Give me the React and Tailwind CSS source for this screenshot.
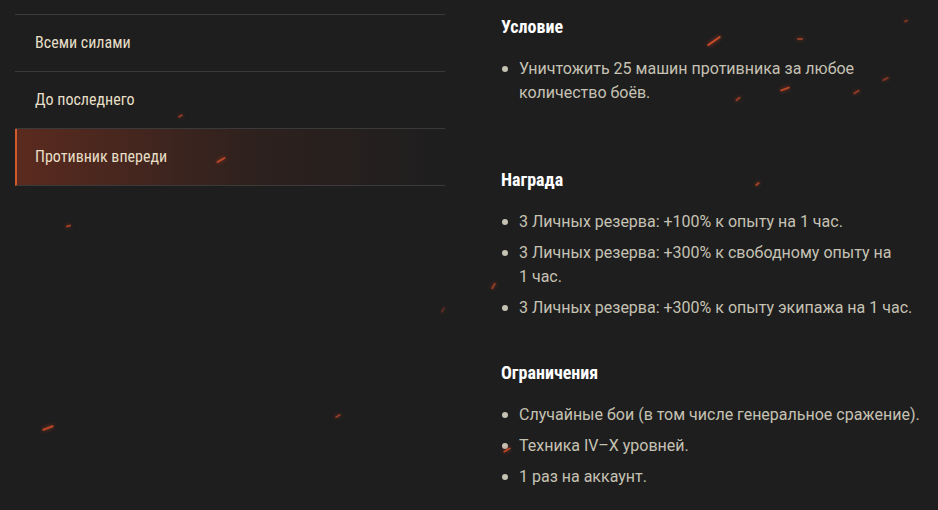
const MENU = ["Всеми силами", "До последнего", "Противник впереди"];

const SECTIONS = [
  {
    title: "Условие",
    items: ["Уничтожить 25 машин противника за любое количество боёв."],
    gap: "mb-[65px]",
  },
  {
    title: "Награда",
    items: [
      "3 Личных резерва: +100% к опыту на 1 час.",
      "3 Личных резерва: +300% к свободному опыту на 1\u00a0час.",
      "3 Личных резерва: +300% к опыту экипажа на 1 час.",
    ],
    gap: "mb-[43px]",
  },
  {
    title: "Ограничения",
    items: [
      "Случайные бои (в том числе генеральное сражение).",
      "Техника IV–X уровней.",
      "1 раз на аккаунт.",
    ],
    gap: "",
  },
];

// decorative sparks: [left, top, width, rotate]
const SPARKS = [
  [706, 40, 16, -35, "opacity-90"],
  [797, 38, 6, 0, "opacity-60"],
  [904, 20, 4, -20, "opacity-50"],
  [780, 88, 10, -20, "opacity-80"],
  [853, 91, 7, -30, "opacity-60"],
  [735, 98, 6, -40, "opacity-60"],
  [882, 78, 7, -25, "opacity-50"],
  [216, 159, 10, -30, "opacity-80"],
  [178, 115, 5, -30, "opacity-60"],
  [66, 225, 5, -15, "opacity-70"],
  [755, 183, 5, -40, "opacity-70"],
  [490, 285, 7, -60, "opacity-60"],
  [42, 427, 12, -20, "opacity-80"],
  [335, 415, 6, -30, "opacity-60"],
  [503, 449, 8, -30, "opacity-80"],
  [440, 309, 6, -60, "opacity-30"],
];

export default function App() {
  return (
    <div className="relative w-[938px] h-[510px] overflow-hidden bg-[#1e1e1f] font-['Roboto',sans-serif]">
      <div className="flex pt-[14px]">
        {/* Menu */}
        <div className="w-[430px] ml-[15px] border-t border-[#3a3a3b]">
          {MENU.map((m, i) => (
            <div
              key={m}
              className={`h-[57px] flex items-center border-b border-[#3a3a3b] text-[16px] text-[#e6dfc6] font-['Roboto_Condensed','Liberation_Sans_Narrow',sans-serif] ${
                i === 2
                  ? "border-l-2 border-l-[#d05a2c] pl-[18px] bg-gradient-to-r from-[#5b2a1e] via-[#2e211e] via-55% to-transparent"
                  : "pl-[20px]"
              }`}
            >
              {m}
            </div>
          ))}
        </div>

        {/* Content */}
        <div className="ml-[56px] w-[430px] pt-[3px]">
          {SECTIONS.map((s) => (
            <div key={s.title} className={s.gap}>
              <h3 className="text-[18px] font-bold text-white leading-[20px] font-['Roboto_Condensed','Liberation_Sans_Narrow',sans-serif]">
                {s.title}
              </h3>
              <ul className="mt-[20px] flex flex-col gap-[7px]">
                {s.items.map((it) => (
                  <li key={it} className="flex text-[16px] leading-[24px] text-[#c6c2b3]">
                    <span className="w-[6px] h-[6px] rounded-full bg-[#c6c2b3] mt-[9px] ml-[1px] mr-[11px] shrink-0" />
                    <span className="max-w-[405px]">{it}</span>
                  </li>
                ))}
              </ul>
            </div>
          ))}
        </div>
      </div>

      {SPARKS.map(([x, y, w, r, o], i) => (
        <span
          key={i}
          className={`absolute h-[2px] rounded-full bg-[#e0512a] shadow-[0_0_4px_#c0401c] ${o}`}
          style={{ left: x, top: y, width: w, transform: `rotate(${r}deg)` }}
        />
      ))}
    </div>
  );
}
